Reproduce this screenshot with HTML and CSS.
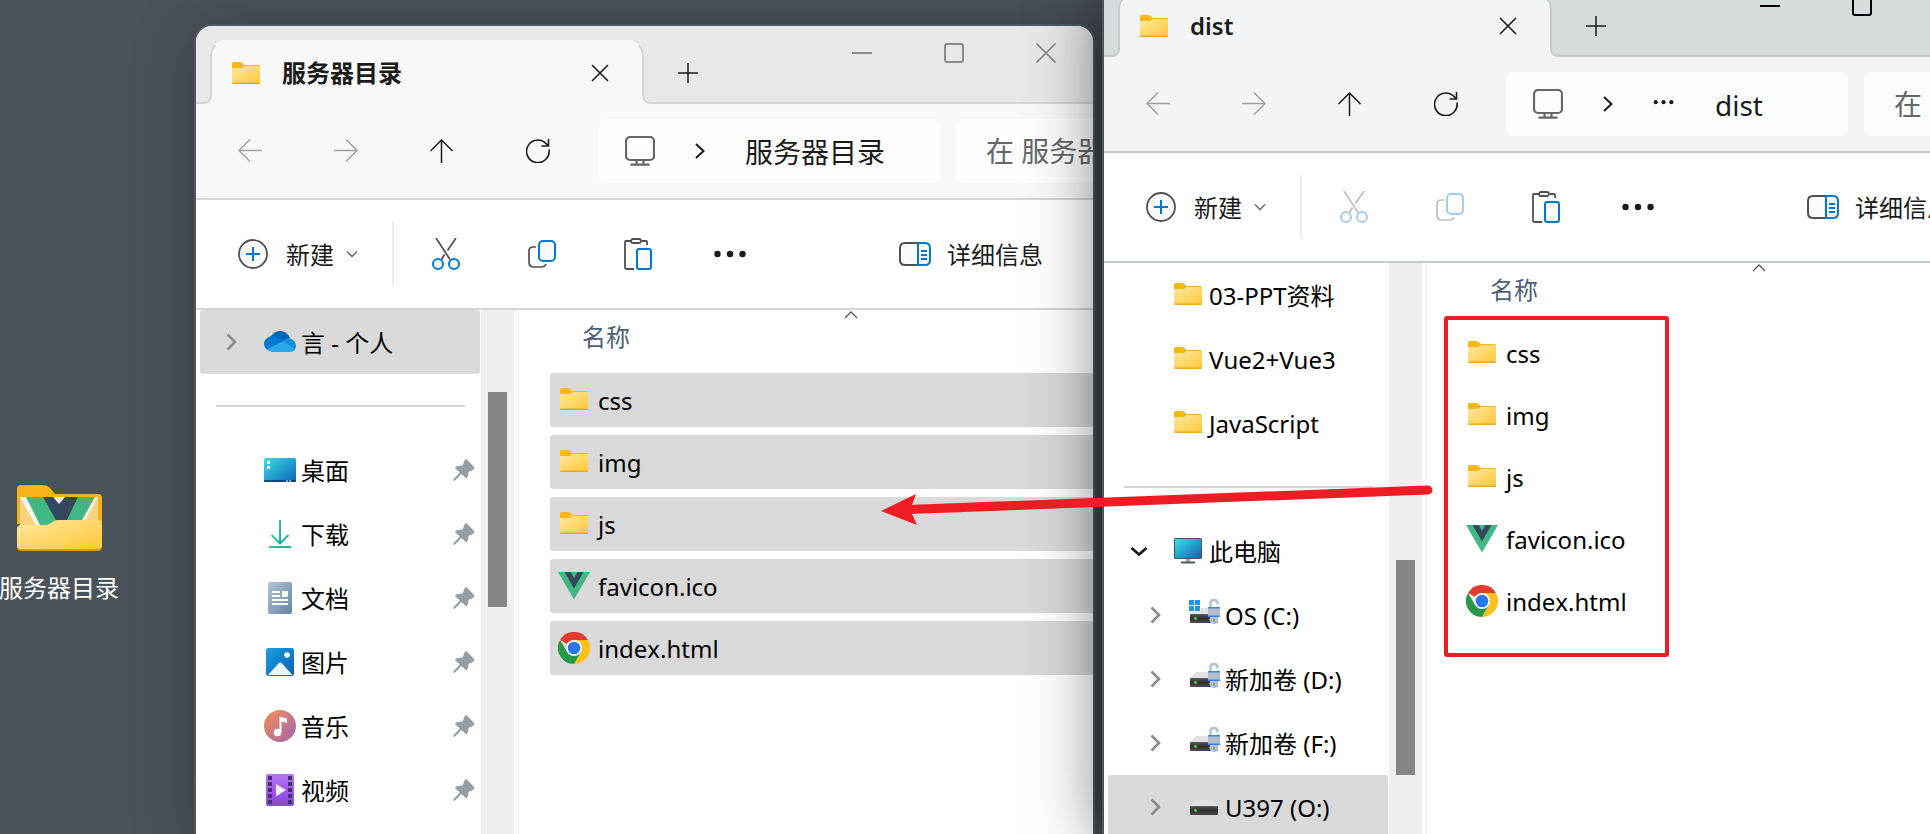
FILE: index.html
```
<!DOCTYPE html>
<html lang="zh-CN">
<head>
<meta charset="utf-8">
<title>服务器目录</title>
<link rel="stylesheet" href="styles.css">
</head>
<body>
<svg class="sprite" aria-hidden="true">
  <defs>
    <linearGradient id="g-folder" x1="0" y1="0" x2="1" y2="1"><stop offset="0" stop-color="#ffe7a2"/><stop offset="1" stop-color="#ffc935"/></linearGradient>
    <linearGradient id="g-screen" x1="0" y1="0" x2="1" y2="1"><stop offset="0" stop-color="#3fdfe6"/><stop offset="1" stop-color="#0a63b8"/></linearGradient>
    <linearGradient id="g-down" x1="0" y1="0" x2="1" y2="1"><stop offset="0" stop-color="#3ccb84"/><stop offset="1" stop-color="#0ea5a5"/></linearGradient>
    <linearGradient id="g-doc" x1="0" y1="0" x2="1" y2="1"><stop offset="0" stop-color="#b3c4d8"/><stop offset="1" stop-color="#6685a3"/></linearGradient>
    <linearGradient id="g-pic" x1="0" y1="0" x2="1" y2="1"><stop offset="0" stop-color="#1b9de2"/><stop offset="1" stop-color="#0a62b5"/></linearGradient>
    <linearGradient id="g-music" x1="0" y1="0" x2="1" y2="1"><stop offset="0.1" stop-color="#ef8a5c"/><stop offset="1" stop-color="#a264b4"/></linearGradient>
    <linearGradient id="g-video" x1="0" y1="0" x2="0" y2="1"><stop offset="0" stop-color="#b573f3"/><stop offset="1" stop-color="#8744e0"/></linearGradient>
    <linearGradient id="g-disk" x1="0" y1="0" x2="0" y2="1"><stop offset="0" stop-color="#5a5a5a"/><stop offset="0.5" stop-color="#303030"/><stop offset="1" stop-color="#4b4b4b"/></linearGradient>
  </defs>
  <symbol id="folder" viewBox="0 0 28 22">
    <path d="M0 1.500Q0 0 1.500 0H8q2 0 3 1.500L12.500 3H26.500Q28 3 28 4.500V12H0z" fill="#f9b715"/>
    <path d="M0 6H9q1.500 0 2.500-1l.5-1H26.500Q28 4 28 5V20.500Q28 22 26.500 22H1.500Q0 22 0 20.500z" fill="url(#g-folder)"/>
    <path d="M0 20.500Q0 22 1.500 22H26.500Q28 22 28 20.500z" fill="#eaa91c"/>
  </symbol>
  <symbol id="vue" viewBox="0 0 32 28">
    <path d="M0 0H32L16 27.500z" fill="#41b883"/><path d="M6.500 0H12.500L16 6l3.500-6H25.500L16 16.500z" fill="#35495e"/>
  </symbol>
  <symbol id="chrome" viewBox="0 0 32 32">
    <path d="M16 16 2.100 8A16 16 0 0 1 29.900 8z" fill="#e33b2e"/>
    <path d="M16 8H29.900A16 16 0 0 1 16 32L23 20z" fill="#fcc21b"/>
    <path d="M2.100 8A16 16 0 0 0 16 32l6.900-12-6.900-4L9.100 20z" fill="#279847"/>
    <circle cx="16" cy="16" r="8" fill="#fff"/><circle cx="16" cy="16" r="6.300" fill="#2a77ea"/>
  </symbol>
  <symbol id="close" viewBox="0 0 18 18"><path d="M1 1 17 17M17 1 1 17" fill="none" stroke="currentColor" stroke-width="1.600"/></symbol>
  <symbol id="plus" viewBox="0 0 20 20"><path d="M10 0V20M0 10H20" fill="none" stroke="currentColor" stroke-width="1.500"/></symbol>
  <symbol id="w-min" viewBox="0 0 20 20"><path d="M0 10H20" stroke="currentColor" stroke-width="2"/></symbol>
  <symbol id="w-max" viewBox="0 0 20 20"><rect x="1" y="1" width="18" height="18" rx="2" fill="none" stroke="currentColor" stroke-width="2"/></symbol>
  <symbol id="w-close" viewBox="0 0 20 20"><path d="M.5.5 19.500 19.500M19.500.5.500 19.500" fill="none" stroke="currentColor" stroke-width="1.700"/></symbol>
  <symbol id="back" viewBox="0 0 24 24"><path d="M24 11.500H1M12 .500 1 11.500l11 11" fill="none" stroke="currentColor" stroke-width="1.500"/></symbol>
  <symbol id="forward" viewBox="0 0 24 24"><path d="M0 11.500H23M12 .500 23 11.500 12 22.500" fill="none" stroke="currentColor" stroke-width="1.500"/></symbol>
  <symbol id="up" viewBox="0 0 24 24"><path d="M11.500 24V1M.500 12 11.500 1l11 11" fill="none" stroke="currentColor" stroke-width="1.500"/></symbol>
  <symbol id="refresh" viewBox="0 0 24 24"><path d="M23 10.500A11.300 11.300 0 1 1 18.500 3.200L22 6.500M22.500 0V7H15.500" fill="none" stroke="currentColor" stroke-width="1.600"/></symbol>
  <symbol id="monitor" viewBox="0 0 30 30"><rect x="1" y="1" width="28" height="23" rx="4" fill="none" stroke="currentColor" stroke-width="2.200"/><path d="M11.500 24v4M18.500 24v4M5.500 28.700H24.500" fill="none" stroke="currentColor" stroke-width="2.200"/></symbol>
  <symbol id="crumb" viewBox="0 0 10 16"><path d="M1 1 8.500 8 1 15" fill="none" stroke="currentColor" stroke-width="2"/></symbol>
  <symbol id="crumb-dots" viewBox="0 0 24 16"><circle cx="3" cy="6" r="2.300"/><circle cx="11.500" cy="6" r="2.300"/><circle cx="20" cy="6" r="2.300"/></symbol>
  <symbol id="add" viewBox="0 0 30 30"><circle cx="15" cy="15" r="14" fill="#fafafa" stroke="#4f4f4f" stroke-width="1.800"/><path d="M15 8V22M8 15H22" stroke="#0078d4" stroke-width="2"/></symbol>
  <symbol id="chev-down" viewBox="0 0 12 8"><path d="M1 1.500 6 6.500 11 1.500" fill="none" stroke="#6a6a6a" stroke-width="1.500"/></symbol>
  <symbol id="cut" viewBox="0 0 32 32"><path d="M6 0 20 21.500M26 0 17.500 12.500M14.500 16.500 11.500 21.500" fill="none" stroke="#4f4f4f" stroke-width="1.700"/><circle cx="8" cy="26" r="5" fill="#fafafa" stroke="#0078d4" stroke-width="2"/><circle cx="24" cy="26" r="5" fill="#fafafa" stroke="#0078d4" stroke-width="2"/></symbol>
  <symbol id="copy" viewBox="0 0 32 32"><path d="M10 9H7Q3 9 3 13V24Q3 29 8 29H15Q19 29 20 26" fill="none" stroke="#4f4f4f" stroke-width="1.700"/><rect x="13" y="3" width="16" height="20" rx="4" fill="#fafafa" stroke="#0078d4" stroke-width="2"/></symbol>
  <symbol id="paste" viewBox="0 0 32 32"><path d="M9 3H4Q3 3 3 4V29.500Q3 31 4.500 31H12M20 3H24Q25 3 25 4V7" fill="none" stroke="#4f4f4f" stroke-width="1.800"/><rect x="9" y="1" width="10" height="4" rx="2" fill="#fafafa" stroke="#4f4f4f" stroke-width="1.800"/><rect x="15" y="11" width="14" height="20" rx="2" fill="#fafafa" stroke="#0078d4" stroke-width="2"/></symbol>
  <symbol id="more" viewBox="0 0 32 8"><circle cx="3.500" cy="4" r="3.200"/><circle cx="16" cy="4" r="3.200"/><circle cx="28.500" cy="4" r="3.200"/></symbol>
  <symbol id="details" viewBox="0 0 32 24"><path d="M19 1H6Q1 1 1 6V18Q1 23 6 23H19z" fill="#fafafa" stroke="#4f4f4f" stroke-width="2"/><path d="M19 1H26Q31 1 31 6V18Q31 23 26 23H19z" fill="#fafafa" stroke="#0078d4" stroke-width="2"/><path d="M22 9H28M22 13H28M22 17H28" stroke="#0078d4" stroke-width="2"/></symbol>
  <symbol id="expand" viewBox="0 0 24 24"><path d="M8.500 4.500 16 12 8.500 19.500" fill="none" stroke="#8b8b8b" stroke-width="2.600"/></symbol>
  <symbol id="collapse" viewBox="0 0 24 24"><path d="M4.500 9 12 15.500 19.500 9" fill="none" stroke="#1a1a1a" stroke-width="2.800"/></symbol>
  <symbol id="sort-up" viewBox="0 0 14 8"><path d="M1 7 7 1l6 6" fill="none" stroke="#5a5a5a" stroke-width="1.300"/></symbol>
  <symbol id="pin" viewBox="0 0 22 22"><path d="M12 0.500Q13 0 14 .8L21 8Q22 9.500 20.500 10.500L15.500 13Q15.500 17 13.500 19.500L8.500 15 2 21.500Q1 22 .5 21.500T.5 20L7 13.500 2 9Q2 6.500 9.500 6.500z" fill="#929da4"/></symbol>
  <symbol id="cloud" viewBox="0 0 32 32"><path d="M6.500 11Q10 5 16 5 23 5 26 12L19 16z" fill="#0364b8"/><path d="M5 11Q9 8.500 13 11L20 15 3 24Q0 21.500 0 18 0 13 5 11z" fill="#0078d4"/><path d="M18.500 15.500Q22 11.500 26 12.500 32 14.500 32 20 32 23 30 24.500L17 17z" fill="#1490df"/><path d="M3 23 19.500 15.500 31 23.500Q29.500 26 26 26H8Q5 26 3 23z" fill="#28a8ea"/></symbol>
  <symbol id="desktop" viewBox="0 0 32 32"><rect x="0" y="4" width="32" height="24" rx="1.500" fill="url(#g-screen)"/><path d="M0 26H32V26.500Q32 28 30.500 28H1.500Q0 28 0 26.500z" fill="#0c4a7c"/><path d="M3 7h3v3H3zM3 12h3v3H3zM22 26.500h2v1h-2zM25 26.500h2v1h-2z" fill="#fff"/></symbol>
  <symbol id="download" viewBox="0 0 32 32"><path d="M15 2h2V26h-2z" fill="url(#g-down)"/><path d="M7.500 17 16 25.500 24.500 17" fill="none" stroke="url(#g-down)" stroke-width="2"/><path d="M5 28H27V30H5z" fill="url(#g-down)"/></symbol>
  <symbol id="document" viewBox="0 0 32 32"><rect x="4" width="24" height="32" rx="2" fill="url(#g-doc)"/><path d="M8 9h8v2H8zM8 13h8v2H8zM18 9h6v6h-6zM8 17H24v2H8zM8 21H24v2H8z" fill="#fff"/></symbol>
  <symbol id="picture" viewBox="0 0 32 32"><rect x="2" y="2" width="28" height="28" rx="2.500" fill="url(#g-pic)"/><circle cx="23" cy="9" r="2.800" fill="#fff"/><path d="M4 29 13.500 18.500Q16 15 18.500 18L28.500 29z" fill="#eef5fd"/></symbol>
  <symbol id="music" viewBox="0 0 32 32"><circle cx="16" cy="16" r="16" fill="url(#g-music)"/><circle cx="13.500" cy="22.500" r="3.800" fill="#fff"/><path d="M15.500 6.500 23 8.500V13L17.500 11.500V22.500H15.500z" fill="#fff"/></symbol>
  <symbol id="video" viewBox="0 0 32 32"><rect x="2" width="28" height="32" rx="2" fill="url(#g-video)"/><path d="M4 2h4v4H4zM4 8h4v4H4zM4 14h4v4H4zM4 20h4v4H4zM4 26h4v4H4zM24 2h4v4h-4zM24 8h4v4h-4zM24 14h4v4h-4zM24 20h4v4h-4zM24 26h4v4h-4z" fill="#47306f"/><path d="M12 10 22 16 12 22.500z" fill="#f4edff"/></symbol>
  <symbol id="pc" viewBox="0 0 32 32"><path d="M14 23h4v4h-4z" fill="#9aa3ac"/><path d="M9 26.500H23V28.500H9z" fill="#4c5964"/><rect x="2" y="3" width="28" height="21" rx="1.500" fill="#45545f"/><path d="M3 4H29V23H3z" fill="url(#g-screen)"/></symbol>
  <symbol id="disk" viewBox="0 0 32 32"><path d="M8 9H24L30 15H2z" fill="#dfe1e5"/><rect x="2" y="15" width="28" height="9" rx="1" fill="url(#g-disk)"/><circle cx="7.500" cy="19.500" r="1.400" fill="#3ee04a"/></symbol>
  <symbol id="lock" viewBox="0 0 32 32"><path d="M22.500 8V4Q22.500 1 26 1T29.500 4V5" fill="none" stroke="#b9c3cd" stroke-width="2.600"/><path d="M20 9H32V18H20z" fill="#b5bdc8"/><circle cx="26" cy="20.500" r="4.500" fill="#b7c0ca"/><path d="M20 8H32V9.500H20zM20 16.500H32V18H20z" fill="#2b8be6"/><path d="M25 20h2v3h-2z" fill="#8c98a5"/></symbol>
  <symbol id="disk-locked" viewBox="0 0 32 32"><use href="#disk"/><use href="#lock"/></symbol>
  <symbol id="disk-system" viewBox="0 0 32 32"><use href="#disk"/><path d="M0 0H12.500V12.500H0z" fill="#fff"/><path d="M1 1H6V6H1zM7 1H12V6H7zM1 7H6V12H1zM7 7H12V12H7z" fill="#1a97e6"/><use href="#lock"/></symbol>
</svg>

<main class="desktop">
  <figure class="shortcut">
    <svg class="shortcut-icon" viewBox="0 0 85 67">
      <path d="M0 5Q0 1 4 1H26Q30 1 33 4L38 10H81Q85 10 85 14V40H0z" fill="#f7b31b"/>
      <path d="M3 13H81V45H3z" fill="#f5d382"/>
      <path d="M3 13H81L62 47H22z" fill="#f6fbe8"/>
      <path d="M9 13H78L60 45H25z" fill="#41b883"/>
      <path d="M26 13H61L49 38H40z" fill="#35495e"/>
      <path d="M36 13H48L42 20z" fill="#fbf7cf"/>
      <path d="M0 45Q0 41 4 41H27Q31 41 34 39 37 36 41 36H81Q85 36 85 40V62Q85 66 81 66H4Q0 66 0 62z" fill="url(#g-folder)"/>
      <path d="M0 62Q0 67 4 67H81Q85 67 85 62 84 65 81 65H4Q1 65 0 62z" fill="#d9991a"/>
    </svg>
    <figcaption class="shortcut-label">服务器目录</figcaption>
  </figure>

  <section class="window window-server" aria-label="服务器目录">
    <header class="tabstrip">
      <div class="tab">
        <svg class="i-folder"><use href="#folder"/></svg>
        <span class="tab-title">服务器目录</span>
        <button class="bare tab-close" aria-label="关闭标签页"><svg class="i18"><use href="#close"/></svg></button>
      </div>
      <button class="bare tab-new" aria-label="新标签页"><svg class="i20"><use href="#plus"/></svg></button>
      <div class="controls">
        <button class="bare control" aria-label="最小化"><svg class="i20"><use href="#w-min"/></svg></button>
        <button class="bare control" aria-label="最大化"><svg class="i20"><use href="#w-max"/></svg></button>
        <button class="bare control" aria-label="关闭"><svg class="i20"><use href="#w-close"/></svg></button>
      </div>
    </header>
    <nav class="navbar">
      <div class="history">
        <button class="bare" aria-label="后退" disabled><svg class="i24"><use href="#back"/></svg></button>
        <button class="bare" aria-label="前进" disabled><svg class="i24"><use href="#forward"/></svg></button>
        <button class="bare" aria-label="上移"><svg class="i24"><use href="#up"/></svg></button>
        <button class="bare" aria-label="刷新"><svg class="i24"><use href="#refresh"/></svg></button>
      </div>
      <div class="address">
        <svg class="i30"><use href="#monitor"/></svg>
        <svg class="i-crumb"><use href="#crumb"/></svg>
        <span>服务器目录</span>
      </div>
      <input class="search" type="text" aria-label="搜索" placeholder="在 服务器目录 中搜索">
    </nav>
    <div class="commands">
      <button class="bare new"><svg class="i30"><use href="#add"/></svg><span>新建</span><svg class="i-chev"><use href="#chev-down"/></svg></button>
      <div class="edit">
        <button class="bare" aria-label="剪切"><svg class="i32"><use href="#cut"/></svg></button>
        <button class="bare" aria-label="复制"><svg class="i32"><use href="#copy"/></svg></button>
        <button class="bare" aria-label="粘贴"><svg class="i32"><use href="#paste"/></svg></button>
      </div>
      <button class="bare more" aria-label="查看更多"><svg class="i-more"><use href="#more"/></svg></button>
      <button class="bare details"><svg class="i-details"><use href="#details"/></svg><span>详细信息</span></button>
    </div>
    <div class="body">
      <ul class="tree">
        <li class="node selected"><svg class="i24"><use href="#expand"/></svg><svg class="i32"><use href="#cloud"/></svg><span>言 - 个人</span></li>
        <li class="rule"></li>
        <li class="node leaf"><svg class="i32"><use href="#desktop"/></svg><span>桌面</span><svg class="i-pin"><use href="#pin"/></svg></li>
        <li class="node leaf"><svg class="i32"><use href="#download"/></svg><span>下载</span><svg class="i-pin"><use href="#pin"/></svg></li>
        <li class="node leaf"><svg class="i32"><use href="#document"/></svg><span>文档</span><svg class="i-pin"><use href="#pin"/></svg></li>
        <li class="node leaf"><svg class="i32"><use href="#picture"/></svg><span>图片</span><svg class="i-pin"><use href="#pin"/></svg></li>
        <li class="node leaf"><svg class="i32"><use href="#music"/></svg><span>音乐</span><svg class="i-pin"><use href="#pin"/></svg></li>
        <li class="node leaf"><svg class="i32"><use href="#video"/></svg><span>视频</span><svg class="i-pin"><use href="#pin"/></svg></li>
      </ul>
      <div class="scrollbar"><div class="thumb"></div></div>
      <div class="files">
        <div class="column">名称<svg class="sort"><use href="#sort-up"/></svg></div>
        <ul class="list">
          <li class="file picked"><svg class="i32"><use href="#folder" x="2" y="4" width="28" height="22"/></svg><span>css</span></li>
          <li class="file picked"><svg class="i32"><use href="#folder" x="2" y="4" width="28" height="22"/></svg><span>img</span></li>
          <li class="file picked"><svg class="i32"><use href="#folder" x="2" y="4" width="28" height="22"/></svg><span>js</span></li>
          <li class="file picked"><svg class="i32"><use href="#vue" y="2" width="32" height="28"/></svg><span>favicon.ico</span></li>
          <li class="file picked"><svg class="i32"><use href="#chrome"/></svg><span>index.html</span></li>
        </ul>
      </div>
    </div>
  </section>

  <section class="window window-dist" aria-label="dist">
    <header class="tabstrip">
      <div class="tab">
        <svg class="i-folder"><use href="#folder"/></svg>
        <span class="tab-title">dist</span>
        <button class="bare tab-close" aria-label="关闭标签页"><svg class="i18"><use href="#close"/></svg></button>
      </div>
      <button class="bare tab-new" aria-label="新标签页"><svg class="i20"><use href="#plus"/></svg></button>
      <div class="controls">
        <button class="bare control" aria-label="最小化"><svg class="i20"><use href="#w-min"/></svg></button>
        <button class="bare control" aria-label="最大化"><svg class="i20"><use href="#w-max"/></svg></button>
        <button class="bare control" aria-label="关闭"><svg class="i20"><use href="#w-close"/></svg></button>
      </div>
    </header>
    <nav class="navbar">
      <div class="history">
        <button class="bare" aria-label="后退" disabled><svg class="i24"><use href="#back"/></svg></button>
        <button class="bare" aria-label="前进" disabled><svg class="i24"><use href="#forward"/></svg></button>
        <button class="bare" aria-label="上移"><svg class="i24"><use href="#up"/></svg></button>
        <button class="bare" aria-label="刷新"><svg class="i24"><use href="#refresh"/></svg></button>
      </div>
      <div class="address">
        <svg class="i30"><use href="#monitor"/></svg>
        <svg class="i-crumb"><use href="#crumb"/></svg>
        <svg class="i-dots"><use href="#crumb-dots"/></svg>
        <span>dist</span>
      </div>
      <input class="search" type="text" aria-label="搜索" placeholder="在 dist 中搜索">
    </nav>
    <div class="commands">
      <button class="bare new"><svg class="i30"><use href="#add"/></svg><span>新建</span><svg class="i-chev"><use href="#chev-down"/></svg></button>
      <div class="edit">
        <button class="bare" aria-label="剪切" disabled><svg class="i32"><use href="#cut"/></svg></button>
        <button class="bare" aria-label="复制" disabled><svg class="i32"><use href="#copy"/></svg></button>
        <button class="bare" aria-label="粘贴"><svg class="i32"><use href="#paste"/></svg></button>
      </div>
      <button class="bare more" aria-label="查看更多"><svg class="i-more"><use href="#more"/></svg></button>
      <button class="bare details"><svg class="i-details"><use href="#details"/></svg><span>详细信息</span></button>
    </div>
    <div class="body">
      <ul class="tree">
        <li class="node leaf"><svg class="i32"><use href="#folder" x="2" y="4" width="28" height="22"/></svg><span>03-PPT资料</span></li>
        <li class="node leaf"><svg class="i32"><use href="#folder" x="2" y="4" width="28" height="22"/></svg><span>Vue2+Vue3</span></li>
        <li class="node leaf"><svg class="i32"><use href="#folder" x="2" y="4" width="28" height="22"/></svg><span>JavaScript</span></li>
        <li class="rule"></li>
        <li class="node"><svg class="i24"><use href="#collapse"/></svg><svg class="i32"><use href="#pc"/></svg><span>此电脑</span></li>
        <li class="node child"><svg class="i24"><use href="#expand"/></svg><svg class="i32"><use href="#disk-system"/></svg><span>OS (C:)</span></li>
        <li class="node child"><svg class="i24"><use href="#expand"/></svg><svg class="i32"><use href="#disk-locked"/></svg><span>新加卷 (D:)</span></li>
        <li class="node child"><svg class="i24"><use href="#expand"/></svg><svg class="i32"><use href="#disk-locked"/></svg><span>新加卷 (F:)</span></li>
        <li class="node child selected"><svg class="i24"><use href="#expand"/></svg><svg class="i32"><use href="#disk"/></svg><span>U397 (O:)</span></li>
      </ul>
      <div class="scrollbar"><div class="thumb"></div></div>
      <div class="files">
        <div class="column">名称<svg class="sort"><use href="#sort-up"/></svg></div>
        <ul class="list">
          <li class="file"><svg class="i32"><use href="#folder" x="2" y="4" width="28" height="22"/></svg><span>css</span></li>
          <li class="file"><svg class="i32"><use href="#folder" x="2" y="4" width="28" height="22"/></svg><span>img</span></li>
          <li class="file"><svg class="i32"><use href="#folder" x="2" y="4" width="28" height="22"/></svg><span>js</span></li>
          <li class="file"><svg class="i32"><use href="#vue" y="2" width="32" height="28"/></svg><span>favicon.ico</span></li>
          <li class="file"><svg class="i32"><use href="#chrome"/></svg><span>index.html</span></li>
        </ul>
      </div>
    </div>
  </section>

  <svg class="markup" aria-hidden="true">
    <path d="M908 509.500 1428 490" stroke="#ee1c24" stroke-width="9" stroke-linecap="round"/>
    <path d="M881 511 916 494 912 505V514L917 525z" fill="#ee1c24"/>
    <rect x="1446" y="318" width="221" height="337" rx="1" fill="none" stroke="#ee1c24" stroke-width="4"/>
  </svg>
</main>
</body>
</html>
```
FILE: styles.css
```
* { box-sizing: border-box; }

body {
  margin: 0;
  font-family: "Noto Sans", "Noto Sans CJK SC", sans-serif;
  font-size: 24px;
  font-kerning: none;
  line-height: 32px;
  color: #000;
}

ul { list-style: none; margin: 0; padding: 0; }
svg { display: block; flex: none; fill: currentColor; }

.sprite { position: absolute; width: 0; height: 0; }

.desktop {
  position: relative;
  height: 100vh;
  overflow: hidden;
  background: #4b535a;
}

/* Desktop shortcut */
.shortcut {
  position: absolute;
  left: -1px;
  top: 484px;
  margin: 0;
  width: 120px;
  display: flex;
  flex-direction: column;
  align-items: center;
  gap: 21px;
}
.shortcut-icon { width: 85px; height: 67px; }
.shortcut-label { color: #fff; white-space: nowrap; }

/* Explorer windows */
.window {
  --strip: #e8e8e8;
  --chrome: #f8f8f8;
  --line: #d5d5d5;
  --field: #fdfdfd;
  --control: #8a8a8a;
  position: absolute;
  bottom: 0;
  width: 897px;
  display: flex;
  flex-direction: column;
  overflow: hidden;
  border-radius: 16px 16px 0 0;
  background: #fff;
  box-shadow: 0 0 0 2px #53595b, 0 8px 60px rgba(0, 0, 0, .35);
}
.window-server { left: 196px; top: 26px; }
.window-dist {
  --strip: #d6dbdd;
  --chrome: #f3f4f6;
  --line: #c5cacd;
  --field: #fcfdfd;
  --control: #000;
  left: 1104px;
  top: -21px;
  box-shadow: 0 0 0 2px #4d5558, 0 8px 70px rgba(0, 0, 0, .6);
}

.bare {
  display: flex;
  align-items: center;
  padding: 0;
  border: 0;
  background: none;
  font: inherit;
  color: #1b1b1b;
}
.bare:disabled { color: #a0a0a0; }
.bare span,
.node span,
.file span,
.address span { padding-top: 2px; }

.i18 { width: 18px; height: 18px; }
.i20 { width: 20px; height: 20px; }
.i24 { width: 24px; height: 24px; }
.i30 { width: 30px; height: 30px; }
.i32 { width: 32px; height: 32px; }
.i-folder { width: 28px; height: 22px; }
.i-crumb { width: 10px; height: 16px; }
.i-dots { width: 22px; height: 16px; }
.i-chev { width: 12px; height: 8px; }
.i-more { width: 32px; height: 8px; }
.i-details { width: 32px; height: 24px; }
.i-pin { width: 22px; height: 22px; margin-left: auto; }

/* Tabs */
.tabstrip {
  flex: none;
  display: flex;
  align-items: flex-end;
  height: 78px;
  padding: 0 1px 0 14px;
  background: var(--strip);
  border-bottom: 2px solid var(--line);
}
.tab {
  position: relative;
  display: flex;
  align-items: center;
  width: 434px;
  height: 64px;
  margin-bottom: -2px;
  padding: 0 33px 0 20px;
  border: 2px solid var(--line);
  border-top-color: var(--chrome);
  border-bottom: 0;
  border-radius: 16px 16px 0 0;
  background: var(--chrome);
}
.tab::before,
.tab::after {
  content: "";
  position: absolute;
  bottom: 0;
  width: 10px;
  height: 10px;
  background: var(--strip);
  border-bottom: 2px solid var(--line);
}
.tab::before {
  right: 100%;
  border-right: 2px solid var(--line);
  border-bottom-right-radius: 8px;
  box-shadow: 3px 3px 0 var(--chrome);
}
.tab::after {
  left: 100%;
  border-left: 2px solid var(--line);
  border-bottom-left-radius: 8px;
  box-shadow: -3px 3px 0 var(--chrome);
}
.tab-title { margin-left: 22px; font-weight: 700; color: #1b1b1b; }
.window-dist .tab-title { font-weight: 600; }
.tab-close { margin-left: auto; }
.tab-new { margin-left: 34px; height: 58px; }
.controls { align-self: flex-start; display: flex; margin-left: auto; }
.control { justify-content: center; width: 92px; height: 54px; color: var(--control); }

/* Navigation */
.navbar {
  flex: none;
  display: flex;
  align-items: center;
  gap: 16px;
  padding: 15px 0 15px 42px;
  background: var(--chrome);
  border-bottom: 2px solid var(--line);
  font-size: 28px;
  color: #1b1b1b;
}
.history { display: flex; gap: 72px; margin-right: 32px; }
.address {
  flex: none;
  display: flex;
  align-items: center;
  gap: 40px;
  width: 342px;
  height: 64px;
  padding-left: 27px;
  border-radius: 8px;
  background: var(--field);
}
.address .i30 { color: #666; }
.search {
  flex: none;
  width: 320px;
  height: 64px;
  padding: 0 30px;
  border: 0;
  border-radius: 8px;
  background: var(--field);
  font: inherit;
}
.search::placeholder { color: #666; opacity: 1; }

/* Commands */
.commands {
  flex: none;
  display: flex;
  align-items: center;
  height: 110px;
  padding: 0 50px 0 42px;
  border-bottom: 2px solid var(--line);
}
.new { height: 64px; padding-right: 34px; border-right: 2px solid #ececec; }
.new span { margin: 0 12px 0 18px; }
.edit { display: flex; gap: 64px; margin: 0 60px 0 36px; }
.edit .bare:disabled { opacity: .36; }
.details { gap: 16px; margin-left: auto; }

/* Folder tree */
.body { flex: 1; display: flex; min-height: 0; }
.tree { flex: none; width: 285px; padding: 0 1px 0 4px; }
.node {
  display: flex;
  align-items: center;
  height: 64px;
  padding: 0 5px 0 19px;
  border-radius: 3px;
  white-space: nowrap;
}
.node .i24 { margin-right: 21px; }
.node span { margin-left: 5px; }
.leaf { padding-left: 64px; }
.child { padding-left: 35px; }
.selected { background: #d9d9d9; }
.rule { height: 64px; padding: 31px 15px 0 16px; }
.rule::before { content: ""; display: block; height: 2px; background: #d5d5d5; }

.scrollbar { flex: none; width: 33px; padding: 82px 7px 0; background: #efefef; }
.thumb { height: 215px; background: #858585; }
.window-dist .scrollbar { padding-top: 297px; }

/* File list */
.files {
  flex: 1;
  margin-left: 3px;
  padding-left: 31px;
  border-left: 2px solid #f5f5f5;
}
.column { position: relative; padding: 11px 32px; color: #4c607a; }
.sort { position: absolute; left: 294px; top: 1px; width: 14px; height: 8px; }
.list { display: flex; flex-direction: column; gap: 8px; padding-top: 9px; }
.file {
  display: flex;
  align-items: center;
  gap: 8px;
  height: 54px;
  padding-left: 8px;
  border-radius: 3px 0 0 3px;
}
.picked { background: #d9d9d9; }

/* Annotation drawn over the windows */
.markup { position: absolute; inset: 0; width: 100%; height: 100%; }
```
